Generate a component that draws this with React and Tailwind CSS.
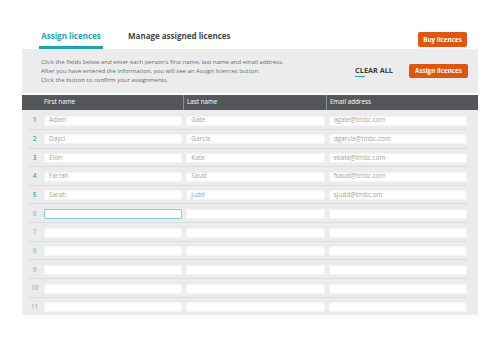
import React from "react";

const rows = [
  ["Adam", "Gate", "agate@tmbc.com"],
  ["Dayci", "Garcia", "dgarcia@tmbc.com"],
  ["Elon", "Kate", "ekate@tmbc.com"],
  ["Farrah", "Saud", "fsaud@tmbc.com"],
  ["Sarah", "judd", "sjudd@tmbc.om"],
  ["", "", ""],
  ["", "", ""],
  ["", "", ""],
  ["", "", ""],
  ["", "", ""],
  ["", "", ""],
];

function Field({ value, focused }) {
  return (
    <div
      className={
        "flex-1 h-[10px] bg-white flex items-center pl-[4px] text-[6.4px] leading-none text-[#a3a3a3] rounded-[1px] border " +
        (focused ? "border-[#86cdd8]" : "border-[#f3f3f3]")
      }
    >
      {value}
    </div>
  );
}

export default function App() {
  return (
    <div className="w-[500px] h-[345px] bg-white font-['Open_Sans',sans-serif] overflow-hidden">
      <div className="ml-[22px] w-[456px]">
        {/* Tabs row */}
        <div className="h-[49px] flex items-end justify-between pl-[17px] pr-[11px]">
          <div className="flex items-end">
            <div className="w-[64px] flex flex-col items-center">
              <span className="text-[8px] font-bold text-[#1fa2b4] leading-[11px] whitespace-nowrap">
                Assign licences
              </span>
              <div className="mt-[5px] h-[3px] w-full bg-[#1fa2b4]" />
            </div>
            <div className="ml-[25px] mb-[8px] text-[8px] font-bold text-[#454545] leading-[11px] whitespace-nowrap">
              Manage assigned licences
            </div>
          </div>
          <div className="mb-[2px] w-[49px] h-[15px] rounded-[2px] bg-[#df5613] text-white text-[6.3px] font-bold flex items-center justify-center whitespace-nowrap">
            Buy licences
          </div>
        </div>

        {/* Instruction area */}
        <div className="h-[44px] bg-[#ececec] flex items-center justify-between pl-[19px] pr-[10px]">
          <div className="text-[6px] leading-[9px] text-[#6a6a6a] whitespace-nowrap">
            <div>Click the fields below and enter each person's first name, last name and email address.</div>
            <div>After you have entered the information, you will see an Assign licences button.</div>
            <div>Click the button to confirm your assignments.</div>
          </div>
          <div className="flex items-center">
            <div className="relative text-[7.3px] font-bold text-[#3d3d3d] leading-none whitespace-nowrap">
              CLEAR ALL
              <div className="absolute left-0 top-[8.5px] w-[10px] h-[1.6px] bg-[#1fa2b4]" />
            </div>
            <div className="ml-[16px] w-[59px] h-[14px] rounded-[2px] bg-[#df5613] text-white text-[6.3px] font-bold flex items-center justify-center whitespace-nowrap">
              Assign licences
            </div>
          </div>
        </div>

        {/* Table */}
        <div className="mt-[1.5px] bg-[#ececec]">
          <div className="h-[15px] bg-[#53575a] flex items-stretch text-white text-[6.3px] leading-none">
            <div className="w-[161px] pl-[22px] flex items-center">First name</div>
            <div className="w-[1px] bg-[#8c8f92]" />
            <div className="w-[142px] pl-[3px] flex items-center">Last name</div>
            <div className="w-[1px] bg-[#8c8f92]" />
            <div className="flex-1 pl-[3px] flex items-center">Email address</div>
          </div>
          <div className="pt-[1.7px] pl-[6px] pr-[11px]">
            {rows.map((r, i) => (
              <div
                key={i}
                className={
                  "flex items-start pt-[4.5px] " +
                  (i < rows.length - 1
                    ? "h-[18.67px] border-b-[1.5px] border-[#dcdcdc]"
                    : "h-[17.5px]")
                }
              >
                <div
                  className={
                    "w-[13px] h-[10px] flex items-center justify-center text-[6.4px] font-semibold leading-none " +
                    (i < 5 ? "text-[#3aa5b9]" : "text-[#86c3cf]")
                  }
                >
                  {i + 1}
                </div>
                <div className="ml-[3px] flex-1 flex gap-[4px]">
                  <Field value={r[0]} focused={i === 5} />
                  <Field value={r[1]} />
                  <Field value={r[2]} />
                </div>
              </div>
            ))}
          </div>
        </div>
      </div>
    </div>
  );
}
